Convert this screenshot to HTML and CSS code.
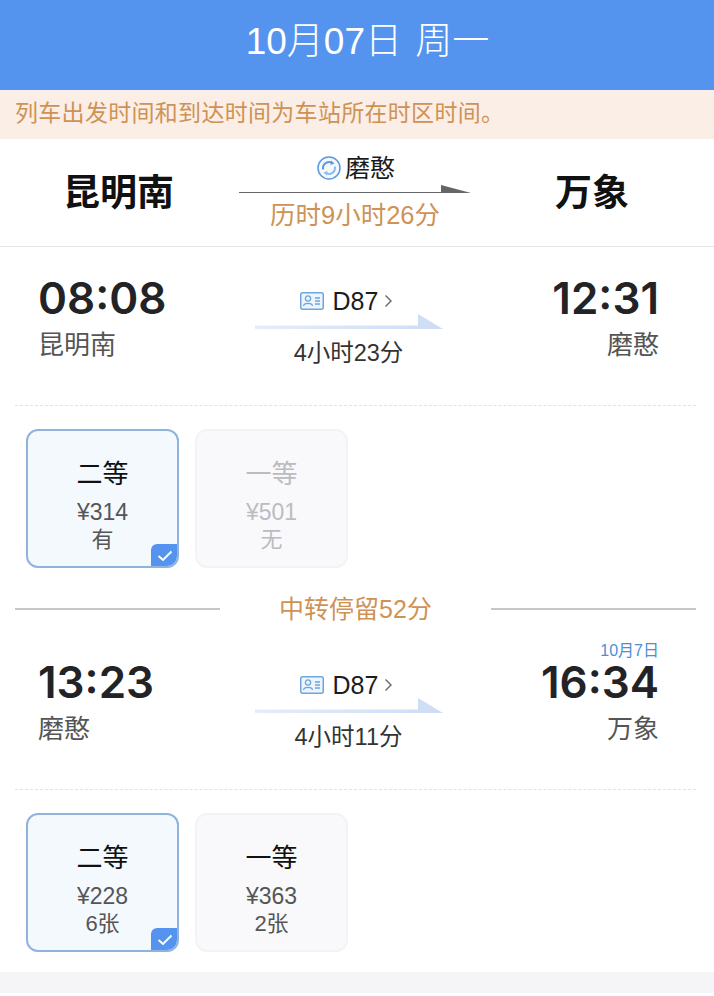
FILE: index.html
```
<!DOCTYPE html>
<html lang="zh-CN">
<head>
    <meta charset="UTF-8">
    <meta name="viewport" content="width=device-width, initial-scale=1.0">
    <title>10月07日 周一</title>
    <link rel="stylesheet" href="styles.css">
</head>
<body>
    <header class="date-bar">10月07日 周一</header>
    <p class="notice">列车出发时间和到达时间为车站所在时区时间。</p>

    <section class="route">
        <div class="route-name">昆明南</div>
        <div class="route-mid">
            <div class="route-via">
                <svg class="sync-icon" width="24" height="24" viewBox="0 0 24 24">
                    <circle cx="12" cy="12" r="11" fill="#f4f8fd" stroke="#5c9ade" stroke-width="1.5"/>
                    <path d="M15.5 7.2 A6 6 0 0 0 6.2 13.5" fill="none" stroke="#5c9ade" stroke-width="2"/>
                    <path d="M8.5 16.8 A6 6 0 0 0 17.8 10.5" fill="none" stroke="#8dbbe9" stroke-width="2"/>
                    <path d="M14 4.5 L17.5 7.5 L13.5 9 Z" fill="#5c9ade"/>
                    <path d="M10 19.5 L6.5 16.5 L10.5 15 Z" fill="#8dbbe9"/>
                </svg>
                <span>磨憨</span>
            </div>
            <svg class="route-arrow" width="232" height="9" viewBox="0 0 232 9">
                <path d="M0 7 H202 V0 L232 8 H0 Z" fill="#666668"/>
            </svg>
            <div class="route-total">历时9小时26分</div>
        </div>
        <div class="route-name route-end">万象</div>
    </section>

    <section class="leg">
        <div class="leg-times">
            <div class="stop">
                <div class="time">08:08</div>
                <div class="station">昆明南</div>
            </div>
            <div class="train">
                <div class="train-no">
                    <svg width="24" height="18" viewBox="0 0 24 18">
                        <rect x="0.75" y="0.75" width="22.5" height="16.5" rx="2" fill="#edf4fc" stroke="#6ea6dd" stroke-width="1.5"/>
                        <circle cx="8" cy="6.5" r="2.6" fill="none" stroke="#6ea6dd" stroke-width="1.3"/>
                        <path d="M3.5 14 C4 10.5 12 10.5 12.5 14 M15 6 H20 M15 9 H20 M15 12 H20" fill="none" stroke="#6ea6dd" stroke-width="1.3"/>
                    </svg>
                    <span>D87</span>
                    <svg class="chevron" width="9" height="14" viewBox="0 0 9 14">
                        <path d="M1.5 1.5 L7 7 L1.5 12.5" fill="none" stroke="#666" stroke-width="1.4"/>
                    </svg>
                </div>
                <svg class="train-arrow" width="188" height="15" viewBox="0 0 188 15">
                    <defs>
                        <linearGradient id="arrow-a" x1="0" x2="1" y1="0" y2="0">
                            <stop offset="0" stop-color="#e6edf8"/>
                            <stop offset="1" stop-color="#cddcf5"/>
                        </linearGradient>
                    </defs>
                    <path d="M0 11.5 H163 V0 L188 15 H0 Z" fill="url(#arrow-a)"/>
                </svg>
                <div class="duration">4小时23分</div>
            </div>
            <div class="stop stop-end">
                <div class="time">12:31</div>
                <div class="station">磨憨</div>
            </div>
        </div>
        <div class="dashes"></div>
        <div class="seats">
            <div class="seat seat-picked">
                <div class="seat-name">二等</div>
                <div class="seat-price">¥314</div>
                <div class="seat-left">有</div>
                <span class="seat-check">
                    <svg width="16" height="12" viewBox="0 0 16 12"><path d="M1.5 6 L6 10 L14.5 1.5" fill="none" stroke="#fff" stroke-width="2"/></svg>
                </span>
            </div>
            <div class="seat seat-off">
                <div class="seat-name">一等</div>
                <div class="seat-price">¥501</div>
                <div class="seat-left">无</div>
            </div>
        </div>
    </section>

    <div class="transfer">
        <span class="transfer-line"></span>
        <span class="transfer-text">中转停留52分</span>
        <span class="transfer-line"></span>
    </div>

    <section class="leg">
        <div class="leg-times">
            <div class="stop">
                <div class="time">13:23</div>
                <div class="station">磨憨</div>
            </div>
            <div class="train">
                <div class="train-no">
                    <svg width="24" height="18" viewBox="0 0 24 18">
                        <rect x="0.75" y="0.75" width="22.5" height="16.5" rx="2" fill="#edf4fc" stroke="#6ea6dd" stroke-width="1.5"/>
                        <circle cx="8" cy="6.5" r="2.6" fill="none" stroke="#6ea6dd" stroke-width="1.3"/>
                        <path d="M3.5 14 C4 10.5 12 10.5 12.5 14 M15 6 H20 M15 9 H20 M15 12 H20" fill="none" stroke="#6ea6dd" stroke-width="1.3"/>
                    </svg>
                    <span>D87</span>
                    <svg class="chevron" width="9" height="14" viewBox="0 0 9 14">
                        <path d="M1.5 1.5 L7 7 L1.5 12.5" fill="none" stroke="#666" stroke-width="1.4"/>
                    </svg>
                </div>
                <svg class="train-arrow" width="188" height="15" viewBox="0 0 188 15">
                    <path d="M0 11.5 H163 V0 L188 15 H0 Z" fill="url(#arrow-a)"/>
                </svg>
                <div class="duration">4小时11分</div>
            </div>
            <div class="stop stop-end">
                <div class="next-date">10月7日</div>
                <div class="time">16:34</div>
                <div class="station">万象</div>
            </div>
        </div>
        <div class="dashes"></div>
        <div class="seats">
            <div class="seat seat-picked">
                <div class="seat-name">二等</div>
                <div class="seat-price">¥228</div>
                <div class="seat-left">6张</div>
                <span class="seat-check">
                    <svg width="16" height="12" viewBox="0 0 16 12"><path d="M1.5 6 L6 10 L14.5 1.5" fill="none" stroke="#fff" stroke-width="2"/></svg>
                </span>
            </div>
            <div class="seat">
                <div class="seat-name">一等</div>
                <div class="seat-price">¥363</div>
                <div class="seat-left">2张</div>
            </div>
        </div>
    </section>

    <div class="page-foot"></div>
</body>
</html>
```

FILE: styles.css
```
* {
    box-sizing: border-box;
}

body {
    margin: 0;
    background-color: #fff;
    color: #1c1c1e;
    font-family: "Liberation Sans", "Noto Sans CJK SC", sans-serif;
}

.date-bar {
    height: 90px;
    padding: 0 0 15px 21px;
    display: flex;
    align-items: center;
    justify-content: center;
    background-color: #5494ee;
    color: #fff;
    font-size: 37px;
    font-weight: 300;
    word-spacing: 3px;
}

.notice {
    margin: 0;
    height: 49px;
    padding: 0 0 7px 15px;
    display: flex;
    align-items: center;
    background-color: #fbeee6;
    color: #cf9255;
    font-size: 23px;
    letter-spacing: 0.3px;
}

.route {
    height: 108px;
    padding-left: 63px;
    display: grid;
    grid-template-columns: 176px 232px 1fr;
    align-items: center;
    border-bottom: 1px solid #e4e4e8;
}

.route-name {
    padding-bottom: 5px;
    color: #111;
    font-size: 37px;
    font-weight: 700;
}

.route-end {
    padding-left: 84px;
}

.route-mid {
    display: flex;
    flex-direction: column;
    align-items: center;
}

.route-via {
    height: 27px;
    margin-left: 5px;
    display: flex;
    align-items: center;
    gap: 4px;
    font-size: 25px;
}

.sync-icon {
    margin: 4px 0 0 -3px;
}

.route-arrow {
    display: block;
    margin-top: 5px;
}

.route-total {
    margin-top: 3px;
    line-height: 36px;
    color: #cf9255;
    font-size: 25.5px;
}

.leg-times {
    padding: 26px 55px 37px 38px;
    display: grid;
    grid-template-columns: 1fr 188px 1fr;
}

.stop-end {
    position: relative;
    text-align: right;
}

.time {
    margin-top: 3px;
    line-height: 44px;
    font-family: Inter, "Liberation Sans", sans-serif;
    font-size: 44px;
    font-weight: 600;
    color: #232326;
}

.station {
    margin-top: 7px;
    line-height: 36px;
    color: #555;
    font-size: 26px;
}

.next-date {
    position: absolute;
    right: 0;
    bottom: 100%;
    margin-bottom: -3px;
    line-height: 18px;
    color: #4c8fd6;
    font-size: 16px;
}

.train {
    padding-top: 13px;
    display: flex;
    flex-direction: column;
    align-items: center;
}

.train-no {
    height: 30px;
    margin-left: -4px;
    display: flex;
    align-items: center;
    gap: 9px;
    font-size: 25px;
}

.chevron {
    margin-left: -3px;
}

.train-arrow {
    display: block;
    margin-top: -2px;
}

.duration {
    margin-top: 9px;
    line-height: 30px;
    font-size: 23.5px;
    color: #333;
}

.dashes {
    margin: 0 18px 0 15px;
    border-top: 1px dashed #dfe2e8;
}

.seats {
    padding: 23px 0 0 26px;
    display: flex;
    gap: 16px;
}

.seat {
    position: relative;
    width: 153px;
    height: 139px;
    padding-top: 28px;
    text-align: center;
    background-color: #f9f9fc;
    border: 2px solid #f3f3f6;
    border-radius: 12px;
    overflow: hidden;
}

.seat-picked {
    background-color: #f4f9fe;
    border-color: #8fb3da;
}

.seat-name {
    line-height: 30px;
    color: #111;
    font-size: 26px;
}

.seat-price {
    margin-top: 9px;
    line-height: 28px;
    color: #555;
    font-size: 23px;
}

.seat-left {
    line-height: 28px;
    color: #555;
    font-size: 22px;
}

.seat-off .seat-name,
.seat-off .seat-price,
.seat-off .seat-left {
    color: #bcbcc0;
}

.seat-check {
    position: absolute;
    right: -2px;
    bottom: -2px;
    width: 28px;
    height: 24px;
    display: flex;
    align-items: center;
    justify-content: center;
    background-color: #5494ee;
    border-top-left-radius: 6px;
}

.transfer {
    height: 63px;
    padding: 19px 18px 0 15px;
    display: flex;
    align-items: center;
    gap: 59px;
}

.transfer-line {
    flex: 1;
    height: 2px;
    background-color: #c6c6c8;
}

.transfer-text {
    margin-bottom: 5px;
    color: #cf9255;
    font-size: 25px;
}

.page-foot {
    height: 21px;
    margin-top: 20px;
    background-color: #f5f5f8;
}
```
